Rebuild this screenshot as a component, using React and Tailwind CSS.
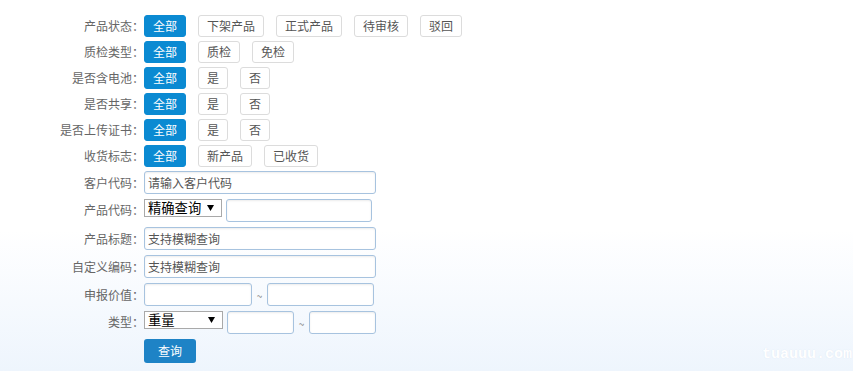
import React from "react";

function Pill({ children, active }) {
  return (
    <span
      className={
        active
          ? "h-[22px] px-[8px] border border-[#0b8ad2] bg-[#0b8ad2] text-white rounded-[3px] text-[12px] leading-[20px] flex items-center"
          : "h-[22px] px-[8px] border border-[#dcdcdc] bg-white text-[#555] rounded-[3px] text-[12px] leading-[20px] flex items-center"
      }
    >
      {children}
    </span>
  );
}

function Label({ children }) {
  return (
    <div className="w-[144px] shrink-0 flex justify-end text-[12px] text-[#666]">
      <span>{children}</span>
      <span className="inline-block w-[12px]">：</span>
    </div>
  );
}

function OptRow({ label, opts }) {
  return (
    <div className="flex items-center h-[22px]">
      <Label>{label}</Label>
      <div className="flex items-center gap-[12px]">
        <Pill active>全部</Pill>
        {opts.map((o) => (
          <Pill key={o}>{o}</Pill>
        ))}
      </div>
    </div>
  );
}

function Input({ w, ph }) {
  return (
    <input
      readOnly
      placeholder={ph}
      className={
        "h-[23px] border border-[#a7c3df] rounded-[3px] bg-white px-[3px] text-[12px] text-[#555] placeholder:text-[#555] shadow-[inset_0_1px_2px_rgba(0,0,0,0.08)] outline-none " +
        w
      }
    />
  );
}

function Sel({ w, children }) {
  return (
    <div
      className={
        "relative h-[18px] border border-[#a9a9a9] bg-white text-[13.3px] leading-[16px] text-black pl-[3px] " + w
      }
    >
      {children}
      <svg className="absolute right-[7px] top-[5px]" width="7" height="6" viewBox="0 0 7 6">
        <path d="M0 0H7L3.5 6Z" fill="#000" />
      </svg>
    </div>
  );
}

export default function App() {
  return (
    <div className="relative h-screen w-full overflow-hidden bg-[linear-gradient(to_bottom,#ffffff_0%,#ffffff_62%,#eef5fd_100%)] font-['Noto_Sans_CJK_SC','Microsoft_YaHei',sans-serif]">
      <div className="flex flex-col pt-[15px] gap-[4px]">
        <OptRow label="产品状态" opts={["下架产品", "正式产品", "待审核", "驳回"]} />
        <OptRow label="质检类型" opts={["质检", "免检"]} />
        <OptRow label="是否含电池" opts={["是", "否"]} />
        <OptRow label="是否共享" opts={["是", "否"]} />
        <OptRow label="是否上传证书" opts={["是", "否"]} />
        <OptRow label="收货标志" opts={["新产品", "已收货"]} />
      </div>
      <div className="flex flex-col gap-[5px] mt-[4px]">
        <div className="flex items-start h-[23px]">
          <div className="leading-[23px] flex"><Label>客户代码</Label></div>
          <Input w="w-[232px]" ph="请输入客户代码" />
        </div>
        <div className="flex items-start h-[23px]">
          <div className="leading-[21px] flex"><Label>产品代码</Label></div>
          <Sel w="w-[78px]">精确查询</Sel>
          <div className="w-[4px]" />
          <Input w="w-[146px]" ph="" />
        </div>
        <div className="flex items-start h-[23px]">
          <div className="leading-[23px] flex"><Label>产品标题</Label></div>
          <Input w="w-[232px]" ph="支持模糊查询" />
        </div>
        <div className="flex items-start h-[23px]">
          <div className="leading-[23px] flex"><Label>自定义编码</Label></div>
          <Input w="w-[232px]" ph="支持模糊查询" />
        </div>
        <div className="flex items-start h-[23px]">
          <div className="leading-[23px] flex"><Label>申报价值</Label></div>
          <Input w="w-[108px]" ph="" />
          <span className="w-[15px] text-center text-[10px] leading-[26px] text-[#888]">~</span>
          <Input w="w-[107px]" ph="" />
        </div>
        <div className="flex items-start h-[23px]">
          <div className="leading-[21px] flex"><Label>类型</Label></div>
          <Sel w="w-[79px]">重量</Sel>
          <div className="w-[4px]" />
          <Input w="w-[67px]" ph="" />
          <span className="w-[15px] text-center text-[10px] leading-[26px] text-[#888]">~</span>
          <Input w="w-[67px]" ph="" />
        </div>
        <div className="flex items-start h-[24px]">
          <div className="w-[144px] shrink-0" />
          <button className="h-[24px] w-[52px] rounded-[3px] bg-[#1e83c6] text-white text-[12px] leading-[24px]">
            查询
          </button>
        </div>
      </div>
      <div className="absolute right-[1px] bottom-[9px] font-['Liberation_Mono',monospace] font-bold text-[15px] leading-[15px] text-white [text-shadow:0_0_1px_rgba(200,215,235,0.6)]">
        tuauuu.com
      </div>
    </div>
  );
}
